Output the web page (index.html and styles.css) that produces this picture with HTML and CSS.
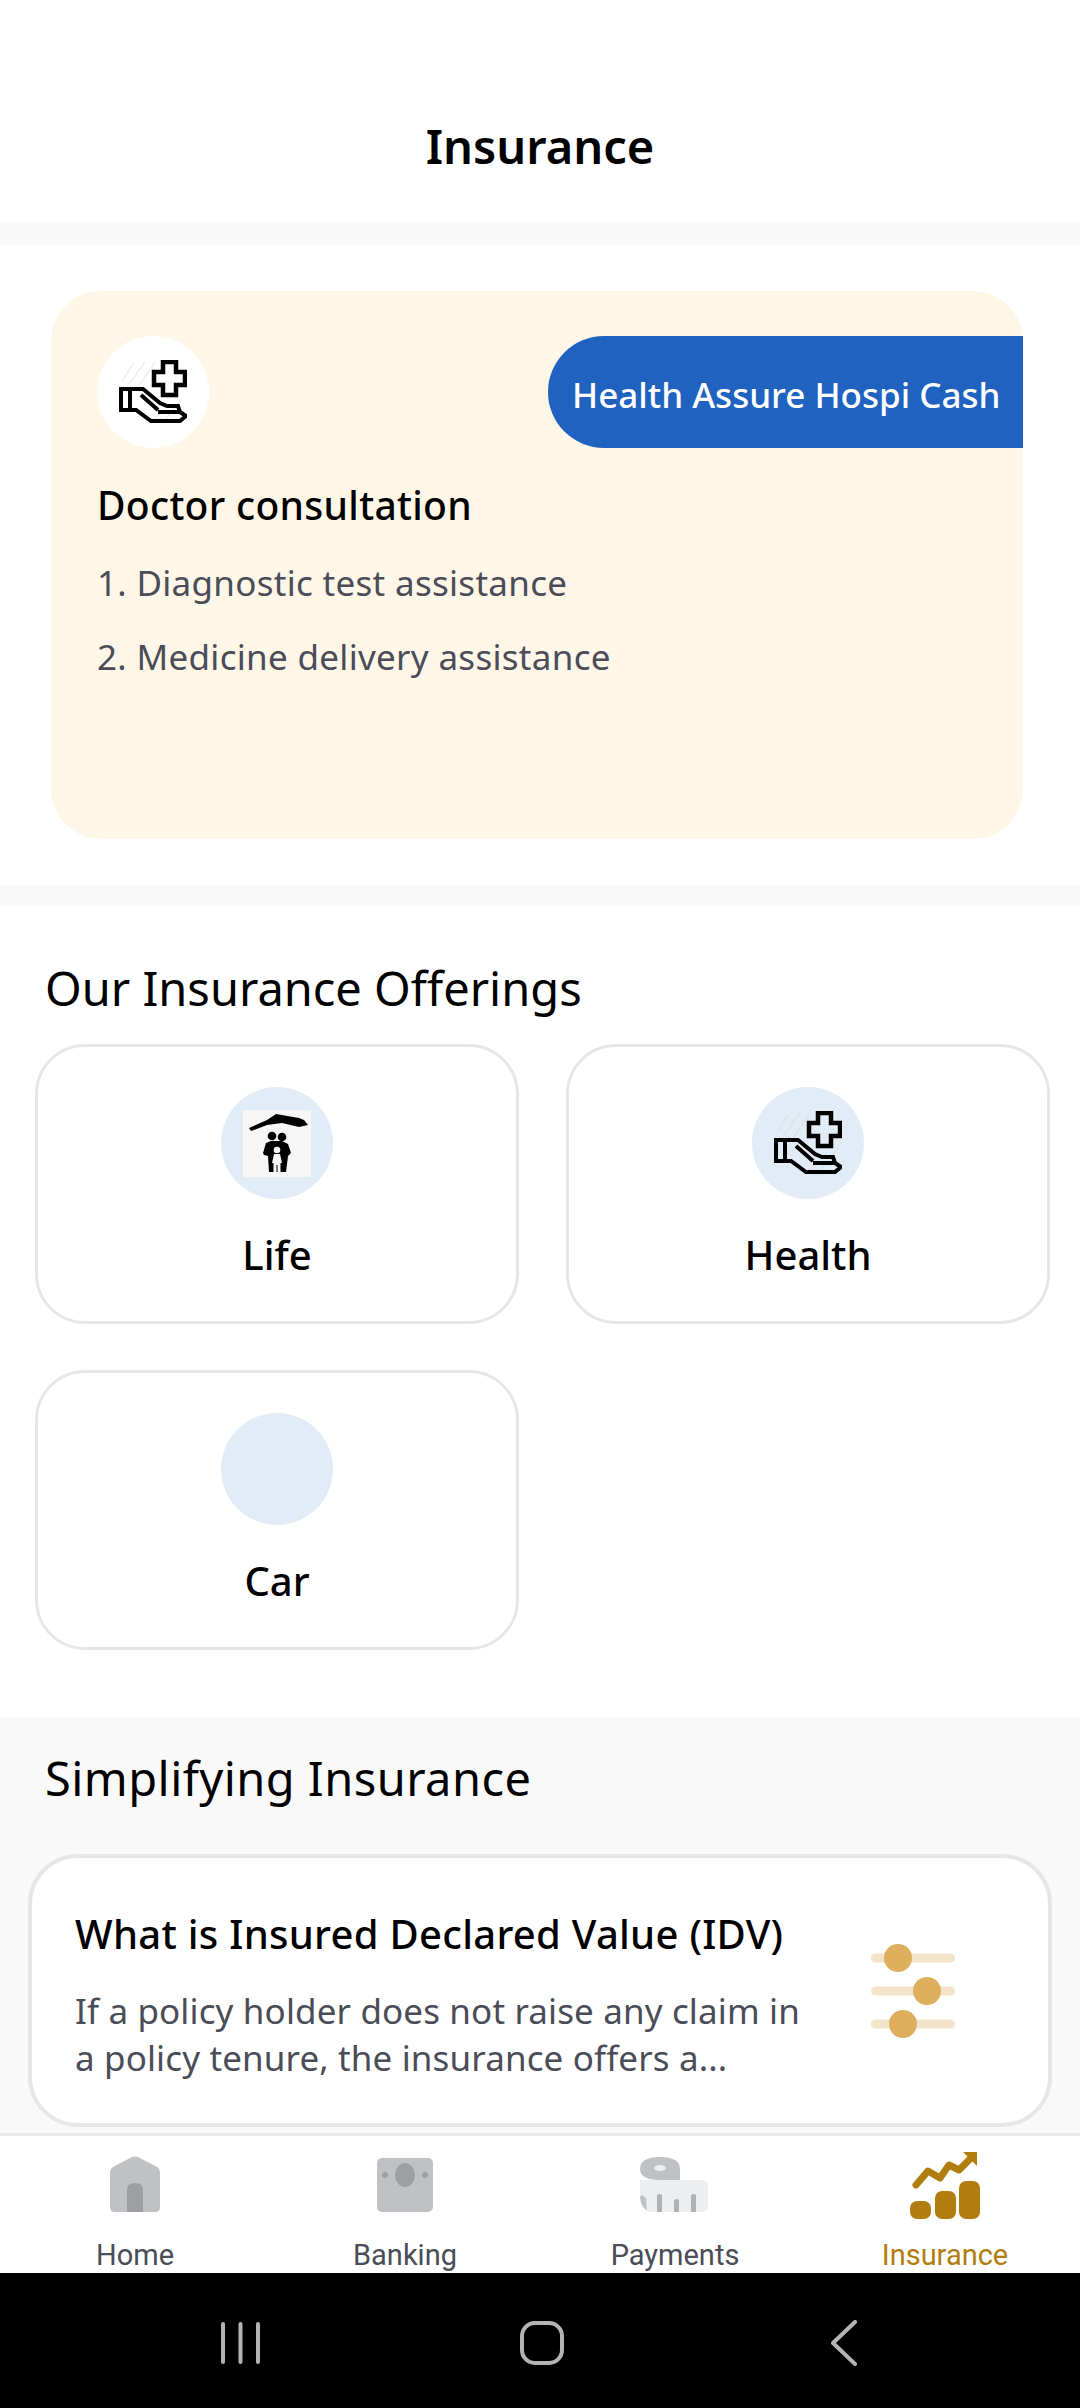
FILE: index.html
```html
<!DOCTYPE html>
<html lang="en">
<head>
    <meta charset="UTF-8">
    <meta name="viewport" content="width=device-width, initial-scale=1.0">
    <title>Insurance</title>
    <link rel="stylesheet" href="styles.css">
</head>
<body>
    <div class="screen">
        <svg width="0" height="0" class="defs">
            <symbol id="handPlus" viewBox="0 0 68 64">
                <path d="M4 20L14 4M10 24L26 2M20 26L36 2M46 60L62 40M34 60L44 50" fill="none" stroke="#d8d8d8" stroke-opacity="0.45" stroke-width="1.5"/>
                <path d="M2 29h9v21H2z" fill="none" stroke="#000" stroke-width="4"/>
                <path d="M11 29h13l17 14 7 3h11l2 6H39M22 35l17 15M11 50h6l15 11h29l6-5-6-4" fill="none" stroke="#000" stroke-width="4"/>
                <path d="M44 2h13v10h9v13h-9v10H44V25h-9V12h9z" fill="none" stroke="#000" stroke-width="4.500"/>
            </symbol>
        </svg>

        <div class="header">
            <h1 class="headerTitle">Insurance</h1>
        </div>

        <div class="content">
            <div class="heroSection">
                <div class="heroCard">
                    <div class="heroTop">
                        <div class="iconCircle iconCircleWhite">
                            <svg class="handIcon"><use href="#handPlus"/></svg>
                        </div>
                        <div class="heroBadge">Health Assure Hospi Cash</div>
                    </div>
                    <div class="heroTitle">Doctor consultation</div>
                    <div class="heroItem">1. Diagnostic test assistance</div>
                    <div class="heroItem">2. Medicine delivery assistance</div>
                </div>
            </div>

            <div class="offerings">
                <h2 class="sectionTitle">Our Insurance Offerings</h2>
                <div class="offerGrid">
                    <div class="offerCard">
                        <div class="iconCircle">
                            <svg class="lifeIcon" viewBox="0 0 68 67">
                                <rect width="68" height="67" fill="#f6f6f6"/>
                                <path d="M6 18L24 10 33 4 56 8 61 10 65 15 56 17 39 13 24 15 8 21z" fill="#000"/>
                                <circle cx="29" cy="26" r="4.300" fill="#000"/>
                                <circle cx="39" cy="27" r="4.300" fill="#000"/>
                                <path d="M20 43L23 33 28 31H39L45 34 48 43 45 46 43 62H26L25 46 21 45z" fill="#000"/>
                                <circle cx="34" cy="40" r="3.300" fill="#f6f6f6"/>
                                <path d="M31 44H37L39 53H37.500V62H34.500V55H33.500V62H30.500V53H29z" fill="#f6f6f6"/>
                            </svg>
                        </div>
                        <div class="offerLabel">Life</div>
                    </div>
                    <div class="offerCard">
                        <div class="iconCircle">
                            <svg class="handIcon"><use href="#handPlus"/></svg>
                        </div>
                        <div class="offerLabel">Health</div>
                    </div>
                    <div class="offerCard">
                        <div class="iconCircle"></div>
                        <div class="offerLabel">Car</div>
                    </div>
                </div>
            </div>

            <div class="simplify">
                <h2 class="sectionTitle">Simplifying Insurance</h2>
                <div class="articleCard">
                    <div class="articleText">
                        <div class="articleTitle">What is Insured Declared Value (IDV)</div>
                        <div class="articleBody">If a policy holder does not raise any claim in a policy tenure, the insurance offers a...</div>
                    </div>
                    <svg class="sliderIcon" viewBox="0 0 84 94">
                        <g fill="#f3e3c8">
                            <rect y="9.500" width="84" height="9" rx="4.500"/>
                            <rect y="42.500" width="84" height="9" rx="4.500"/>
                            <rect y="75.500" width="84" height="9" rx="4.500"/>
                        </g>
                        <g fill="#dcae5e">
                            <circle cx="27" cy="14" r="14"/>
                            <circle cx="56" cy="47" r="14"/>
                            <circle cx="32" cy="80" r="14"/>
                        </g>
                    </svg>
                </div>
            </div>
        </div>

        <div class="tabBar">
            <div class="tabItem">
                <svg class="tabIcon" viewBox="0 0 70 70">
                    <path d="M10 60V20q0-3 3-5L32 5q3-1 6 0l19 10q3 2 3 5v35q0 5-5 5H15q-5 0-5-5z" fill="#bfc1c5"/>
                    <path d="M27 60V38q0-7 8-7t8 7v22z" fill="#9d9fa3"/>
                </svg>
                <span class="tabText">Home</span>
            </div>
            <div class="tabItem">
                <svg class="tabIcon" viewBox="0 0 70 70">
                    <rect x="7" y="6" width="56" height="54" rx="5" fill="#bfc1c5"/>
                    <ellipse cx="35" cy="23" rx="10" ry="12" fill="#9d9fa3"/>
                    <circle cx="15" cy="23" r="3" fill="#9d9fa3"/>
                    <circle cx="55" cy="23" r="3" fill="#9d9fa3"/>
                </svg>
                <span class="tabText">Banking</span>
            </div>
            <div class="tabItem">
                <svg class="tabIcon" viewBox="0 0 70 70">
                    <path d="M0 28h62q6 0 6 5v22q0 5-6 5H12Q0 60 0 45z" fill="#eceef0"/>
                    <path d="M0 17Q0 5 20 5t20 12v11H20Q0 28 0 17z" fill="#bfc1c5"/>
                    <ellipse cx="20" cy="16" rx="6" ry="3" fill="#eceef0"/>
                    <path d="M0 45q1 10 7 13l-1-12-4-3z" fill="#bfc1c5"/>
                    <path d="M17 43q3-2 5 0v17h-5zM34 48q3-2 5 0v12h-5zM51 43q3-2 5 0v17h-5z" fill="#b0b2b6"/>
                </svg>
                <span class="tabText">Payments</span>
            </div>
            <div class="tabItem tabItemActive">
                <svg class="tabIcon" viewBox="0 0 70 70">
                    <path d="M6 33L18 19l12 7 9-13 10 5L63 4" fill="none" stroke="#b27d0f" stroke-width="7" stroke-linecap="round" stroke-linejoin="round"/>
                    <path d="M53 0h14v14z" fill="#b27d0f"/>
                    <rect x="0" y="49" width="21" height="18" rx="7" fill="#b27d0f"/>
                    <rect x="25" y="39" width="21" height="28" rx="7" fill="#b27d0f"/>
                    <rect x="49" y="29" width="21" height="38" rx="7" fill="#b27d0f"/>
                </svg>
                <span class="tabText">Insurance</span>
            </div>
        </div>

        <div class="systemBar">
            <div class="sysCell">
                <svg class="sysRecents" viewBox="0 0 39 42">
                    <path d="M2 2v38M19.500 2v38M37 2v38" stroke="#b4b4b4" stroke-width="4" stroke-linecap="round"/>
                </svg>
            </div>
            <div class="sysCell">
                <svg class="sysHome" viewBox="0 0 44 44">
                    <rect x="2" y="2" width="40" height="40" rx="13" fill="none" stroke="#b4b4b4" stroke-width="4"/>
                </svg>
            </div>
            <div class="sysCell">
                <svg class="sysBack" viewBox="0 0 26 46">
                    <path d="M24 2L2 23l22 21" fill="none" stroke="#b4b4b4" stroke-width="4" stroke-linecap="round" stroke-linejoin="round"/>
                </svg>
            </div>
        </div>
    </div>
</body>
</html>
```

FILE: styles.css
```css
* {
    box-sizing: border-box;
}
body {
    margin: 0;
    padding: 0;
    font-family: "Noto Sans", Arial, sans-serif;
    background-color: white;
}
.defs {
    position: absolute;
}
.screen {
    width: 1080px;
    height: 2408px;
    display: flex;
    flex-direction: column;
    overflow: hidden;
}
.header {
    height: 222px;
    padding-top: 114px;
    text-align: center;
    background-color: white;
}
.headerTitle {
    margin: 0;
    font-size: 47px;
    line-height: 64px;
    font-weight: 600;
    color: black;
}
.content {
    flex: 1;
    min-height: 0;
    overflow: hidden;
    background-color: #f9f9f9;
    padding-top: 23px;
}
.heroSection {
    background-color: white;
    padding: 46px 57px 46px 51px;
}
.heroCard {
    height: 548px;
    background-color: #fef6e6;
    border-radius: 50px;
    padding: 45px 0 0 46px;
}
.heroTop {
    display: flex;
    justify-content: space-between;
    margin-bottom: 32px;
}
.iconCircle {
    width: 112px;
    height: 112px;
    border-radius: 50%;
    background-color: #e2ecf6;
    display: flex;
    justify-content: center;
    align-items: center;
}
.iconCircleWhite {
    background-color: white;
}
.handIcon {
    width: 68px;
    height: 64px;
}
.lifeIcon {
    width: 68px;
    height: 67px;
}
.heroBadge {
    width: 475px;
    height: 112px;
    padding: 4px 0 0 24px;
    display: flex;
    align-items: center;
    background-color: #2062c0;
    border-radius: 56px 0 0 56px;
    color: white;
    font-size: 35px;
    font-weight: 500;
    white-space: nowrap;
}
.heroTitle {
    font-size: 39px;
    letter-spacing: 0.3px;
    line-height: 50px;
    font-weight: 500;
    color: black;
    margin-bottom: 30px;
}
.heroItem {
    font-size: 35px;
    letter-spacing: 0.3px;
    line-height: 46px;
    color: #4a4c57;
    margin-bottom: 28px;
}
.offerings {
    margin-top: 21px;
    height: 811px;
    background-color: white;
    padding-top: 50px;
}
.sectionTitle {
    margin: 0;
    padding-left: 45px;
    font-size: 47px;
    line-height: 64px;
    font-weight: 400;
    color: black;
}
.simplify .sectionTitle {
    letter-spacing: 0.45px;
}
.offerGrid {
    display: grid;
    grid-template-columns: 484px 484px;
    gap: 46px 47px;
    padding: 24px 0 0 35px;
}
.offerCard {
    height: 280px;
    border: 3px solid #e6e6e6;
    border-radius: 50px;
    background-color: white;
    display: flex;
    flex-direction: column;
    align-items: center;
    padding-top: 40px;
}
.offerLabel {
    margin-top: 29px;
    font-size: 40px;
    line-height: 54px;
    font-weight: 500;
    color: black;
}
.simplify {
    padding-top: 29px;
}
.articleCard {
    margin: 44px 28px 0;
    height: 273px;
    border: 4px solid #e6e6e6;
    border-radius: 50px;
    background-color: white;
    display: flex;
    align-items: flex-start;
    padding: 50px 0 0 43px;
    gap: 40px;
}
.articleText {
    flex: none;
    width: 756px;
}
.articleTitle {
    font-size: 40px;
    letter-spacing: 0.28px;
    line-height: 52px;
    font-weight: 500;
    color: black;
    margin-bottom: 27px;
    white-space: nowrap;
}
.articleBody {
    max-width: 740px;
    font-size: 35px;
    letter-spacing: 0.13px;
    line-height: 47px;
    color: #4a4c57;
}
.sliderIcon {
    width: 84px;
    height: 94px;
    margin-top: 36px;
}
.tabBar {
    height: 140px;
    display: flex;
    background-color: white;
    border-top: 3px solid #e8e8e8;
}
.tabItem {
    flex: 1;
    display: flex;
    flex-direction: column;
    align-items: center;
    padding-top: 16px;
}
.tabIcon {
    width: 70px;
    height: 70px;
}
.tabText {
    margin-top: 16px;
    font-family: Roboto, Arial, sans-serif;
    font-size: 29px;
    line-height: 34px;
    color: #4a4c57;
}
.tabItemActive .tabText {
    color: #b27d0f;
}
.systemBar {
    height: 135px;
    background-color: black;
    display: flex;
    align-items: center;
    padding: 5px 0 0 89px;
}
.sysCell {
    width: 302px;
    display: flex;
    justify-content: center;
}
.sysRecents {
    width: 39px;
    height: 42px;
}
.sysHome {
    width: 44px;
    height: 44px;
}
.sysBack {
    width: 26px;
    height: 46px;
}
```
